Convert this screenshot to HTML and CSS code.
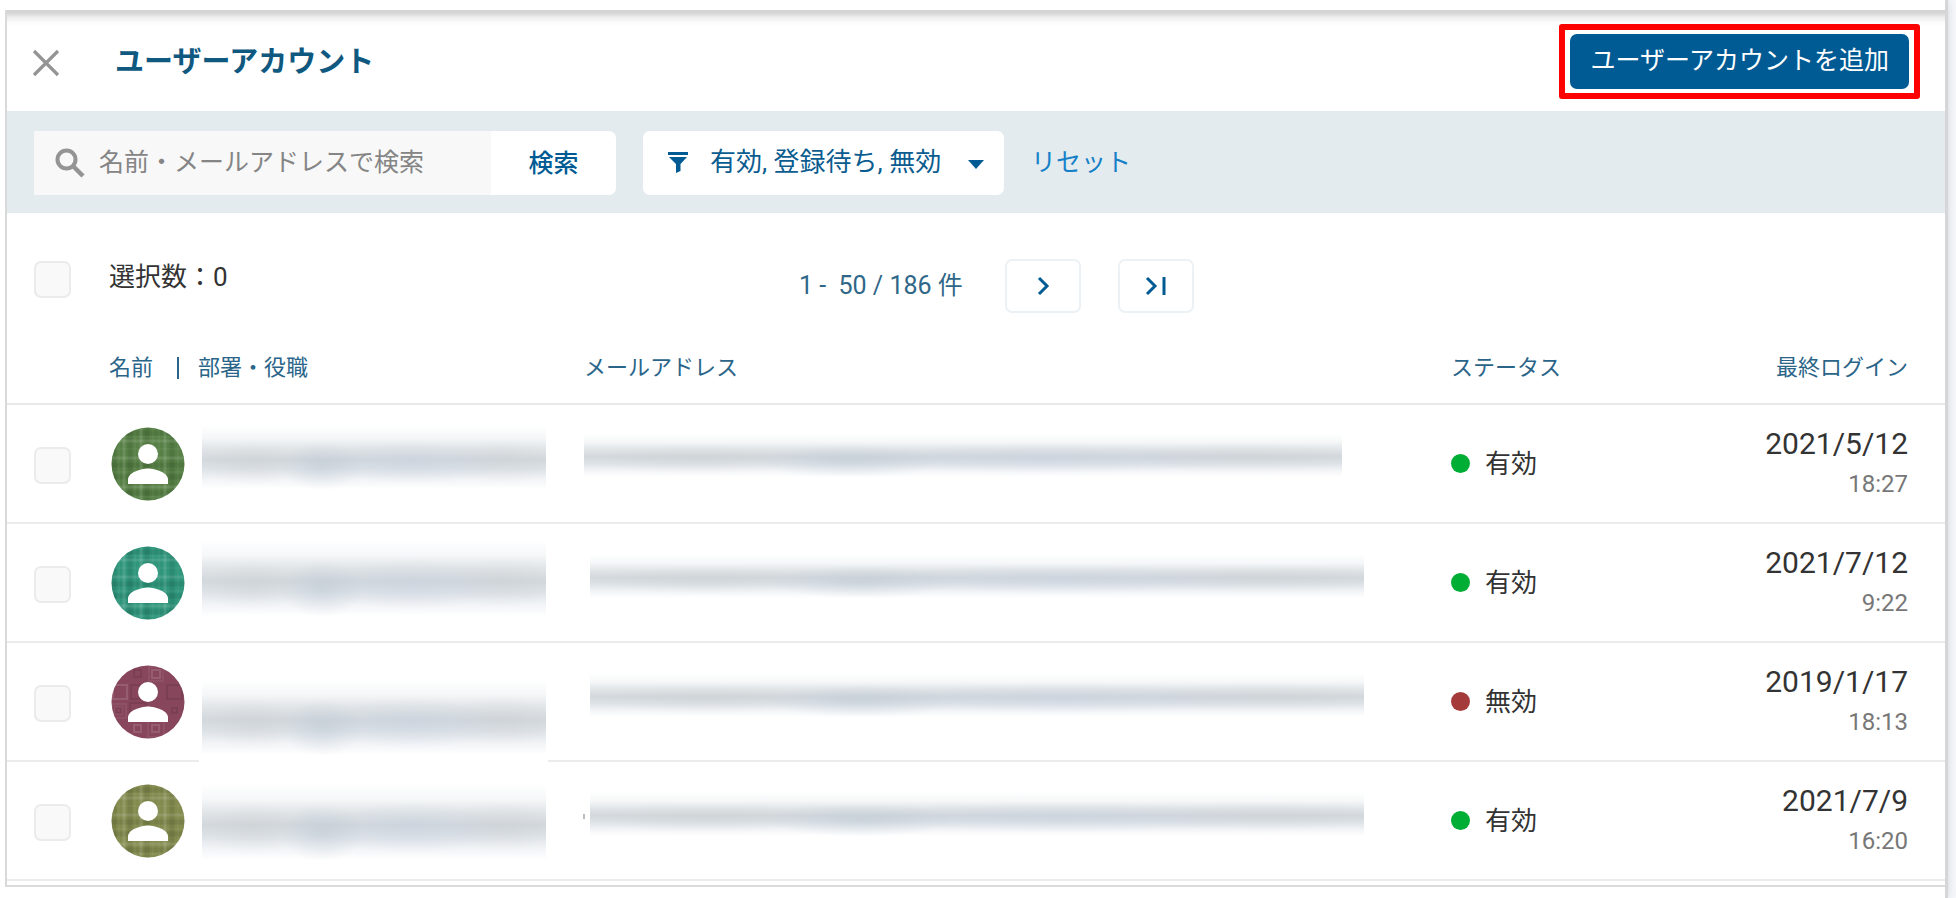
FILE: index.html
```html
<!DOCTYPE html>
<html lang="ja">
<head>
<meta charset="utf-8">
<title>ユーザーアカウント</title>
<link rel="stylesheet" href="styles.css">
</head>
<body>
<svg class="defs" aria-hidden="true">
  <defs>
    <clipPath id="disc"><circle cx="37" cy="37" r="36.5"/></clipPath>
    <symbol id="person" viewBox="0 0 74 74">
      <circle cx="37" cy="27" r="10"/>
      <path d="M17 57v-4.500c0-7 13-11 20-11s20 4 20 11V57z"/>
    </symbol>
    <g id="plaid">
      <path d="M3 0V74M19 0V74M36 0V74M61 0V74" stroke="#000" stroke-opacity=".08" stroke-width="5"/>
      <path d="M0 6H74M0 38H74M0 50H74M0 66H74" stroke="#000" stroke-opacity=".08" stroke-width="5"/>
      <path d="M13 0V74M30 0V74M54 0V74" stroke="#fff" stroke-opacity=".12" stroke-width="3"/>
      <path d="M0 14H74M0 31H74M0 60H74" stroke="#fff" stroke-opacity=".11" stroke-width="3"/>
      <path d="M8 0V74M24 0V74M42 0V74M48 0V74M67 0V74M0 10H74M0 22H74M0 45H74M0 70H74" stroke="#fff" stroke-opacity=".08" stroke-width="1"/>
    </g>
    <g id="squares" fill="none" stroke-width="2">
      <path d="M41 5h8v8h-8zM2 20h14v14H2zM23 60h7v7h-7zM41 60h7v7h-7z" stroke="#fff" stroke-opacity=".13"/>
      <path d="M38 2h14v14H38zM4 42h7v7H4zM1 39h14v14H1zM37 56h16v16H37z" stroke="#fff" stroke-opacity=".06"/>
      <path d="M56 20h15v14H56zM19 38h16v14H19zM5 43h5v5H5zM61 43h5v5h-5zM20 20h14v14H20zM23 5h7v7h-7z" stroke="#000" stroke-opacity=".09"/>
    </g>
  </defs>
</svg>

<div class="page">
  <main class="panel">
    <header class="head">
      <button class="close" type="button" aria-label="閉じる">
        <svg width="28" height="28" viewBox="0 0 28 28"><path d="M2 2l24 24M26 2L2 26" stroke="#949494" stroke-width="3.200" fill="none"/></svg>
      </button>
      <h1 class="title">ユーザーアカウント</h1>
      <div class="highlight"><button class="add" type="button">ユーザーアカウントを追加</button></div>
    </header>

    <div class="filters">
      <form class="search">
        <label class="field">
          <svg class="search-icon" width="30" height="30" viewBox="0 0 30 30" fill="none" stroke="#949494"><circle cx="11.500" cy="11.500" r="9" stroke-width="4"/><path d="M18 18l10 10" stroke-width="4.500"/></svg>
          <input class="query" type="text" placeholder="名前・メールアドレスで検索" aria-label="名前・メールアドレスで検索">
        </label>
        <button class="submit" type="button">検索</button>
      </form>
      <label class="status-filter">
        <svg class="funnel" width="20" height="21" viewBox="0 0 20 21" fill="#005b94"><path d="M0 0h20v3H0zM1 5h18l-6.500 7v7l-4.500 2v-9z"/></svg>
        <select class="states" aria-label="ステータス"><option>有効, 登録待ち, 無効</option></select>
        <svg class="caret" width="16" height="9" viewBox="0 0 16 9"><path d="M0 0h16l-8 9z" fill="#005b94"/></svg>
      </label>
      <a class="reset" href="#">リセット</a>
    </div>

    <div class="toolbar">
      <input class="check" id="all" type="checkbox">
      <label class="count" for="all">選択数：0</label>
      <nav class="pager">
        <span class="range">1 -&nbsp; 50 / 186 件</span>
        <button class="page-btn" type="button" aria-label="次へ"><svg width="24" height="24" viewBox="0 0 24 24" fill="none" stroke="#005b94" stroke-width="3"><path d="M8 4l8 8-8 8"/></svg></button>
        <button class="page-btn" type="button" aria-label="最後へ"><svg width="24" height="24" viewBox="0 0 24 24" fill="none" stroke="#005b94" stroke-width="3"><path d="M3 4l8 8-8 8M20 3v18"/></svg></button>
      </nav>
    </div>

    <table class="users">
      <colgroup><col class="c-check"><col class="c-name"><col><col class="c-status"><col class="c-login"></colgroup>
      <thead>
        <tr><th></th><th><span class="name-head">名前</span>部署・役職</th><th>メールアドレス</th><th>ステータス</th><th class="login">最終ログイン</th></tr>
      </thead>
      <tbody>
        <tr>
          <td><input class="check" type="checkbox" aria-label="選択"></td>
          <td class="top"><div class="who"><svg class="avatar" viewBox="0 0 74 74"><g clip-path="url(#disc)"><rect width="74" height="74" fill="#578046"/><use href="#plaid"/></g><use href="#person" fill="#fff"/></svg><span class="mask name-a"></span></div></td>
          <td class="top"><div class="mask mail-a"></div></td>
          <td><span class="state on">有効</span></td>
          <td class="login"><div class="date">2021/5/12</div><div class="time">18:27</div></td>
        </tr>
        <tr>
          <td><input class="check" type="checkbox" aria-label="選択"></td>
          <td class="top"><div class="who"><svg class="avatar" viewBox="0 0 74 74"><g clip-path="url(#disc)"><rect width="74" height="74" fill="#2f967c"/><use href="#plaid"/></g><use href="#person" fill="#fff"/></svg><span class="mask name-b"></span></div></td>
          <td class="top"><div class="mask mail-b"></div></td>
          <td><span class="state on">有効</span></td>
          <td class="login"><div class="date">2021/7/12</div><div class="time">9:22</div></td>
        </tr>
        <tr>
          <td><input class="check" type="checkbox" aria-label="選択"></td>
          <td class="top"><div class="who covered"><svg class="avatar" viewBox="0 0 74 74"><g clip-path="url(#disc)"><rect width="74" height="74" fill="#87465c"/><use href="#squares"/></g><use href="#person" fill="#fff"/></svg><span class="mask name-c"></span></div></td>
          <td class="top"><div class="mask mail-b"></div></td>
          <td><span class="state off">無効</span></td>
          <td class="login"><div class="date">2019/1/17</div><div class="time">18:13</div></td>
        </tr>
        <tr>
          <td><input class="check" type="checkbox" aria-label="選択"></td>
          <td class="top"><div class="who"><svg class="avatar" viewBox="0 0 74 74"><g clip-path="url(#disc)"><rect width="74" height="74" fill="#838b4f"/><use href="#plaid"/></g><use href="#person" fill="#fff"/></svg><span class="mask name-d"></span></div></td>
          <td class="top"><div class="mask mail-b speck"></div></td>
          <td><span class="state on">有効</span></td>
          <td class="login"><div class="date">2021/7/9</div><div class="time">16:20</div></td>
        </tr>
      </tbody>
    </table>
  </main>
</div>
</body>
</html>
```
FILE: styles.css
```css
* { box-sizing: border-box; }

body {
  margin: 0;
  background: #f6f7fa;
  color: #333;
  font-family: Roboto, "Noto Sans CJK JP", sans-serif;
  font-size: 26px;
}

button, input, select { margin: 0; font-family: inherit; }
button { padding: 0; border: 0; background: none; cursor: pointer; }
svg { display: block; }
.defs { position: absolute; width: 0; height: 0; }

.page {
  min-height: 100vh;
  margin-right: 8px;
  padding: 10px 0 11px 5px;
  background: #fff;
  border-right: 3px solid #d6d6d9;
  box-shadow: 0 0 8px #d2d5d9;
}

.panel {
  padding-bottom: 4px;
  border-left: 2px solid #d8dada;
  border-bottom: 2px solid #d9dada;
}

.head {
  display: flex;
  align-items: center;
  padding: 14px 25px 12px 25px;
  background: linear-gradient(#d5d5d5 0, #d5d5d5 3px, #ececec 7px, #fafafa 12px, #fff 16px);
}

.close { padding-top: 2px; }

.title {
  flex: 1;
  margin: 0 0 0 55px;
  color: #0f5880;
  font-size: 29px;
  font-weight: 700;
  line-height: 36px;
}

.highlight {
  padding: 4px 5px;
  border: 6px solid #f00;
  border-radius: 3px;
}

.add {
  display: block;
  padding: 9px 20px 10px;
  border-radius: 7px;
  background: #005b94;
  color: #fff;
  font-size: 25px;
  line-height: 36px;
}

.filters {
  display: flex;
  align-items: center;
  gap: 27px;
  padding: 20px 27px 18px;
  background: #e3ebee;
}

.search { display: flex; height: 64px; margin: 0; }
.field, .status-filter { position: relative; display: block; }
.search-icon { position: absolute; top: 17px; left: 21px; }

.query {
  width: 457px;
  height: 64px;
  padding: 0 12px 2px 65px;
  border: 0;
  background: #f8f8f8;
  color: #333;
  font-size: 25px;
}
.query::placeholder { color: #858585; opacity: 1; }

.submit {
  width: 125px;
  padding-bottom: 4px;
  border-radius: 0 7px 7px 0;
  background: #fff;
  color: #005b94;
  font-size: 25px;
  font-weight: 500;
}

.funnel, .caret { position: absolute; pointer-events: none; }
.funnel { top: 21px; left: 25px; }
.caret { top: 29px; right: 20px; }

.states {
  width: 361px;
  height: 64px;
  padding: 0 40px 2px 67px;
  border: 0;
  border-radius: 7px;
  background: #fff;
  color: #0b5c8f;
  font-size: 26px;
  appearance: none;
}

.reset { color: #1580c8; font-size: 25px; line-height: 36px; text-decoration: none; }

.toolbar {
  display: grid;
  grid-template-columns: 75px minmax(200px, 690px) 1fr;
  align-items: start;
  padding: 46px 27px 0;
}

.check {
  display: block;
  width: 37px;
  height: 37px;
  margin: 2px 0 0;
  border: 2px solid #ebebeb;
  border-radius: 7px;
  background: #f9f9f9;
  appearance: none;
}
.users .check { margin-top: 4px; }

.count { line-height: 36px; }

.pager { display: flex; align-items: center; }
.range { min-width: 169px; color: #2f6788; font-size: 25px; line-height: 36px; white-space: pre; }

.page-btn {
  display: flex;
  align-items: center;
  justify-content: center;
  width: 76px;
  height: 54px;
  margin-left: 37px;
  border: 2px solid #ebf1f4;
  border-radius: 7px;
  background: #fff;
}

.users { width: 100%; border-collapse: separate; border-spacing: 0; table-layout: fixed; }
.c-check { width: 102px; }
.c-name { width: 475px; }
.c-status { width: 254px; }
.c-login { width: 240px; }

.users th {
  padding: 40px 0 20px;
  border-bottom: 2px solid #e9e9e9;
  color: #2a6589;
  font-size: 22px;
  font-weight: 400;
  line-height: 30px;
  text-align: left;
}

.name-head {
  display: inline-block;
  margin-right: 19px;
  padding-right: 24px;
  border-right: 2px solid #2a6589;
  line-height: 22px;
}

.users td {
  height: 119px;
  padding: 0;
  border-bottom: 2px solid #ebebeb;
}
.users td:first-child { padding-left: 27px; }
.users .top { vertical-align: top; }
.users .login { padding-right: 37px; text-align: right; }

.who { display: flex; align-items: flex-start; padding-left: 2px; }
.avatar { flex: none; width: 74px; height: 74px; margin: 22px 17px 0 0; }

/* Obscured personal data */
.mask {
  display: block;
  background:
    radial-gradient(ellipse 12% 38% at 35% 64%, rgba(180, 194, 206, .4), transparent),
    radial-gradient(ellipse 26% 34% at 61% 58%, rgba(196, 206, 222, .4), transparent),
    radial-gradient(ellipse 14% 34% at 15% 60%, rgba(196, 200, 202, .25), transparent),
    radial-gradient(ellipse 16% 34% at 87% 56%, rgba(196, 200, 204, .25), transparent),
    linear-gradient(transparent, #f5f7f8 20%, #e0e4e7 38%, #d3d8dd 54%, #dde2e7 68%, #f1f3f6 84%, transparent);
}

.name-a, .name-b, .name-c, .name-d { width: 344px; height: 76px; }
.name-a { height: 64px; margin-top: 20px; }
.name-b { margin-top: 16px; }
.name-c { z-index: 1; margin-top: 36px; }
.name-d { margin-top: 22px; }

.mail-a, .mail-b { height: 44px; }
.mail-a { max-width: 758px; margin-top: 28px; }
.mail-b { max-width: 774px; margin: 30px 0 0 6px; }

.covered { position: relative; }
.covered::after {
  position: absolute;
  top: 112px;
  left: 90px;
  width: 349px;
  height: 9px;
  background: #fff;
  content: "";
}

.speck { position: relative; }
.speck::before {
  position: absolute;
  top: 22px;
  left: -7px;
  width: 2px;
  height: 5px;
  background: #bbb;
  content: "";
}

.state { display: flex; align-items: center; gap: 15px; line-height: 36px; }
.state::before { width: 19px; height: 19px; border-radius: 50%; content: ""; }
.on::before { background: #00ad35; }
.off::before { background: #a53a3a; }

.date { font-size: 30px; line-height: 41px; }
.time { color: #777; font-size: 24px; line-height: 41px; }
```
